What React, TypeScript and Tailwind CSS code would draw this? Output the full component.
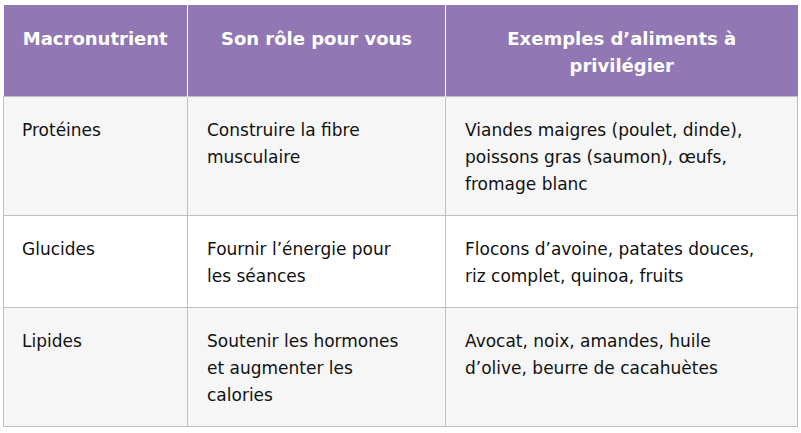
// Macronutrient table — purple header, striped rows.

interface Row {
  macro: string;
  role: string[];
  examples: string[];
}

const rows: Row[] = [
  {
    macro: "Protéines",
    role: ["Construire la fibre", "musculaire"],
    examples: ["Viandes maigres (poulet, dinde),", "poissons gras (saumon), œufs,", "fromage blanc"],
  },
  {
    macro: "Glucides",
    role: ["Fournir l’énergie pour", "les séances"],
    examples: ["Flocons d’avoine, patates douces,", "riz complet, quinoa, fruits"],
  },
  {
    macro: "Lipides",
    role: ["Soutenir les hormones", "et augmenter les", "calories"],
    examples: ["Avocat, noix, amandes, huile", "d’olive, beurre de cacahuètes"],
  },
];

function Lines({ lines }: { lines: string[] }) {
  return (
    <>
      {lines.map((l, i) => (
        <span key={i} className="block whitespace-nowrap">
          {l}
        </span>
      ))}
    </>
  );
}

export default function App() {
  return (
    <div className="min-h-[433px] bg-white pl-[3px] pt-[5px] font-['DejaVu_Sans',sans-serif]">
      <table className="w-[794px] table-fixed border-collapse text-[17px] leading-[27px] text-[#111]">
        <colgroup>
          <col className="w-[184px]" />
          <col className="w-[258px]" />
          <col className="w-[352px]" />
        </colgroup>
        <thead>
          <tr className="bg-[#9178b4] text-white">
            <th className="h-[91px] border-r border-white px-[10px] align-top pt-[20px] text-[18px] font-bold leading-[27px]">
              Macronutrient
            </th>
            <th className="border-r border-white px-[10px] align-top pt-[20px] text-[18px] font-bold leading-[27px]">
              Son rôle pour vous
            </th>
            <th className="px-[10px] align-top pt-[20px] text-[18px] font-bold leading-[27px]">
              Exemples d’aliments à
              <br />
              privilégier
            </th>
          </tr>
        </thead>
        <tbody>
          {rows.map((r, i) => (
            <tr key={r.macro} className={i % 2 === 0 ? "bg-[#f6f6f6]" : "bg-white"}>
              <td className="border border-[#bfbfbf] px-[18px] pt-[20px] pb-[17px] align-top">{r.macro}</td>
              <td className="border border-[#bfbfbf] px-[19px] pt-[20px] pb-[17px] align-top">
                <Lines lines={r.role} />
              </td>
              <td className="border border-[#bfbfbf] px-[19px] pt-[20px] pb-[17px] align-top">
                <Lines lines={r.examples} />
              </td>
            </tr>
          ))}
        </tbody>
      </table>
    </div>
  );
}
